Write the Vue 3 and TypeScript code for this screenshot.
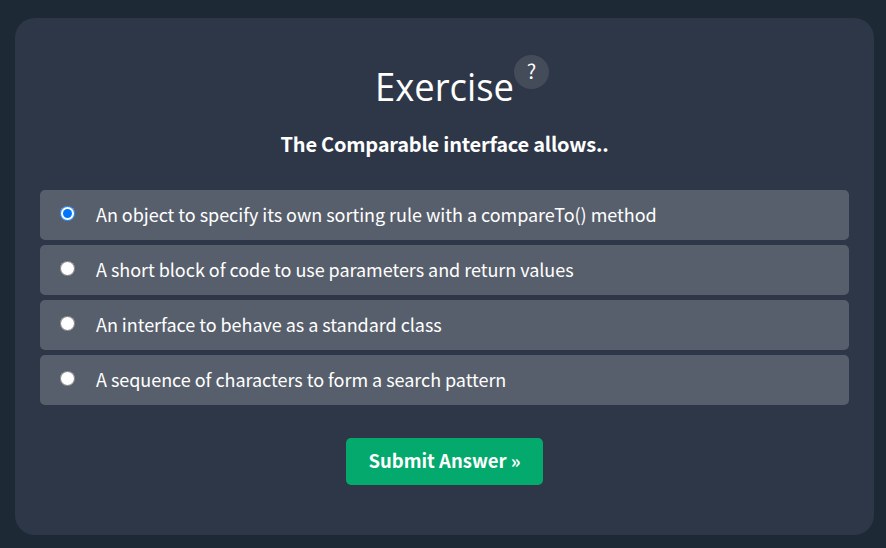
<script setup lang="ts">
import { ref } from 'vue'

const options: string[] = [
  'An object to specify its own sorting rule with a compareTo() method',
  'A short block of code to use parameters and return values',
  'An interface to behave as a standard class',
  'A sequence of characters to form a search pattern',
]
const selected = ref<number>(0)
</script>

<template>
  <main class="page">
    <form class="card" @submit.prevent>
      <h2 class="title">
        <span class="title-text">Exercise</span>
        <span class="help">?</span>
      </h2>
      <p class="question">The Comparable interface allows..</p>
      <div class="options">
        <label v-for="(option, i) in options" :key="i" class="option">
          <input v-model="selected" class="radio" type="radio" name="answer" :value="i" />
          <span class="option-text">{{ option }}</span>
        </label>
      </div>
      <button class="submit" type="submit">Submit Answer »</button>
    </form>
  </main>
</template>

<style>
body {
  background: #1d2a35;
}
</style>

<style scoped>
.page {
  box-sizing: border-box;
  height: 548px;
  padding: 18px 12px 13px 15px;
  background: #1d2a35;
  color: #fff;
  font-family: 'Noto Sans CJK SC', 'Noto Sans', sans-serif;
}
.card {
  box-sizing: border-box;
  display: flex;
  flex-direction: column;
  align-items: center;
  height: 517px;
  padding: 37px 25px 0;
  border-radius: 20px;
  background: #2e3748;
}
.title {
  display: flex;
  align-items: flex-start;
  width: 174px;
  height: 63px;
  margin: 0 0 0 34px;
  font-weight: 400;
}
.title-text {
  width: 139px;
  margin: 4px 0 0;
  font-family: 'Open Sans', 'Noto Sans', sans-serif;
  font-size: 39px;
  line-height: 54px;
  transform: scaleX(0.933);
  transform-origin: left center;
}
.help {
  box-sizing: border-box;
  flex: none;
  width: 35px;
  height: 34px;
  padding-left: 1px;
  border-radius: 50%;
  background: #444c5a;
  font-size: 20px;
  line-height: 32px;
  text-align: center;
}
.question {
  height: 54px;
  margin: 9px 0 0;
  font-size: 20px;
  font-weight: 700;
  letter-spacing: -0.22px;
  line-height: 34px;
  white-space: nowrap;
}
.options {
  display: flex;
  flex-direction: column;
  gap: 5px;
  align-self: stretch;
  margin-top: 9px;
}
.option {
  display: flex;
  align-items: center;
  box-sizing: border-box;
  height: 50px;
  padding-left: 20px;
  border-radius: 5px;
  background: #585f6c;
}
.radio {
  width: 15px;
  height: 15px;
  margin: 0 21px 3px 0;
}
.option-text {
  margin-bottom: 2px;
  font-size: 18px;
  letter-spacing: -0.04px;
  line-height: 48px;
  white-space: nowrap;
}
.submit {
  width: 197px;
  height: 47px;
  margin-top: 33px;
  padding: 0 0 2px;
  border: 0;
  border-radius: 5px;
  background: #04aa6d;
  color: #fff;
  font-family: inherit;
  font-size: 18.5px;
  font-weight: 700;
  line-height: 45px;
}
</style>
